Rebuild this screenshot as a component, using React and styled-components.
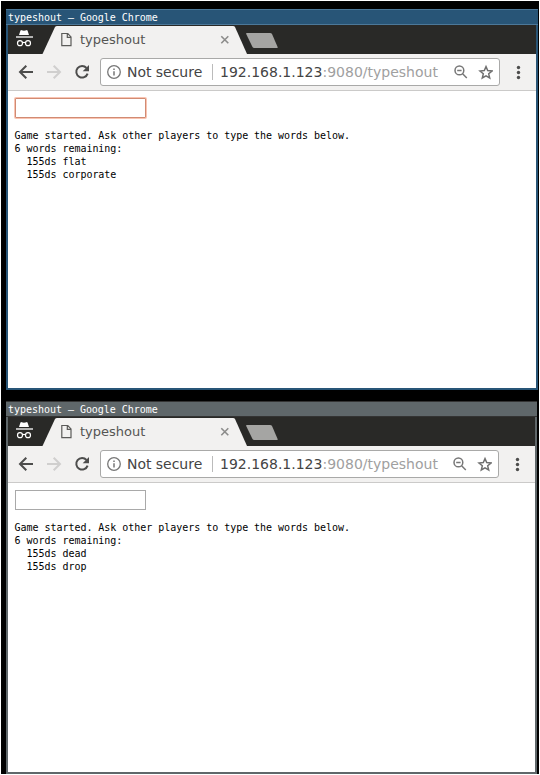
import React from "react";
import styled, { createGlobalStyle } from "styled-components";

const GlobalStyle = createGlobalStyle`
  * { box-sizing: border-box; }
  body { margin: 0; background: #fff; font-family: "DejaVu Sans", sans-serif; }
`;

const Desktop = styled.main`
  width: 538px;
  height: 773px;
  margin: 1px;
  padding: 8px 0 0 5px;
  background: #000;
  display: flex;
  flex-direction: column;
  gap: 11px;
`;

const Window = styled.section`
  display: flex;
  flex-direction: column;
  width: ${(p) => (p.$active ? 532 : 531)}px;
  height: ${(p) => (p.$active ? 381 : 373)}px;
  border: 2px solid ${(p) => (p.$active ? "#285577" : "#5f676a")};
  border-top: 0;
`;

const TitleBar = styled.header`
  flex: none;
  height: 16px;
  margin: 0 -2px;
  padding: 1px 0 0 2px;
  border-top: 1px solid ${(p) => (p.$active ? "#4c7899" : "#333")};
  border-bottom: 1px solid ${(p) => (p.$active ? "#4c7899" : "#333")};
  background: ${(p) => (p.$active ? "#285577" : "#5f676a")};
  color: #fff;
  font: 10px/14px "DejaVu Sans Mono", monospace;
  letter-spacing: -0.03px;
  white-space: pre;
`;

const TabStrip = styled.div`
  flex: none;
  height: 29px;
  display: flex;
  background: #292927;
`;

const StripArt = styled.svg`
  display: block;
  flex: none;
`;

const Tab = styled.div`
  width: 151px;
  height: 28px;
  margin-top: 1px;
  display: flex;
  align-items: center;
  background: #f2f1f0;
  color: #555553;
  font-size: 13px;
  line-height: 27px;
  padding-bottom: 1px;
`;

const TabLabel = styled.span`
  flex: 1;
  padding-left: 8px;
`;

const Toolbar = styled.div`
  flex: none;
  height: 37px;
  display: flex;
  align-items: flex-start;
  padding-top: 4px;
  background: #f2f1f0;
  border-bottom: 1px solid #cbcac9;
`;

const NavIcons = styled.svg`
  display: block;
  flex: none;
  width: 92px;
  height: 28px;
`;

const AddressBar = styled.div`
  display: flex;
  align-items: center;
  width: ${(p) => (p.$active ? 400 : 399)}px;
  height: 28px;
  border: 1px solid #a9a9a8;
  border-radius: 3px;
  background: #fff;
  padding-left: 6px;
  color: #444;
  font-size: 14px;
  line-height: 26px;
  white-space: nowrap;
`;

const Security = styled.span`
  width: 76px;
  margin-left: 6px;
  letter-spacing: -0.03px;
`;

const Divider = styled.i`
  width: 1px;
  height: 16px;
  margin: 0 7px 0 9px;
  background: #bbb;
`;

const Url = styled.span`
  width: 219px;
`;

const Muted = styled.span`
  color: #a0a0a0;
`;

const ActionIcons = styled.svg`
  display: block;
  flex: none;
  margin-left: ${(p) => (p.$active ? 14 : 13)}px;
`;

const MenuIcon = styled.svg`
  display: block;
  margin-left: 15px;
`;

const Page = styled.div`
  flex: 1;
  background: #fff;
  padding: 7px 0 0 7px;
`;

const WordInput = styled.input`
  display: block;
  width: 131px;
  height: 20px;
  padding: 1px 3px;
  border: 1px solid ${(p) => (p.$active ? "#d18b73" : "#a9a9a9")};
  border-radius: ${(p) => (p.$active ? 1 : 0)}px;
  box-shadow: ${(p) => (p.$active ? "0 0 0 1px #f9c4b2" : "none")};
  background: #fff;
  outline: none;
`;

const Output = styled.pre`
  margin: 11px 0 0 -0.5px;
  color: #000;
  font: 10px/13px "DejaVu Sans Mono", monospace;
  letter-spacing: -0.03px;
`;

function Tabs() {
  return (
    <TabStrip>
      <StripArt width="53" height="29" viewBox="0 0 53 29">
        <path d="M34.5 29 47 2Q47.8 1 49 1H53V29Z" fill="#f2f1f0" />
        <path d="M12.4 5.7q.4-.8 1.2-.5l2.4.6 2.4-.6q.8-.3 1.2.5L21 10H11Z" fill="#fff" />
        <path d="M8 12h17" stroke="#fff" strokeWidth="1.3" />
        <g fill="none" stroke="#fff" strokeWidth="1.2">
          <circle cx="12" cy="18.2" r="2.5" />
          <circle cx="20" cy="18.2" r="2.5" />
          <path d="M14.5 17.7q1.5-.8 3 0" />
        </g>
      </StripArt>
      <Tab>
        <StripArt width="11" height="15" viewBox="0 0 11 15">
          <path d="M.8 1.5h6L10 4.9v8.8H.8ZM6.3 1.6v3.8H10" fill="none" stroke="#5b5b59" strokeWidth="1.2" />
        </StripArt>
        <TabLabel>typeshout</TabLabel>
      </Tab>
      <StripArt width="70" height="29" viewBox="0 0 70 29">
        <path d="M0 1H21Q22.5 1 23 2L35 29H0Z" fill="#f2f1f0" />
        <path d="m9.3 11.2 7 7m0-7-7 7" stroke="#8c8c8b" strokeWidth="1.6" />
        <path d="M34.7 8H58Q59.5 8 60 9L65.5 21.7Q66 23 65 23H42.3Q41 23 40.5 22L34.2 9Q33.8 8 34.7 8Z" fill="#a5a5a3" />
      </StripArt>
    </TabStrip>
  );
}

function BrowserWindow({ active, words }) {
  return (
    <Window $active={active}>
      <TitleBar $active={active}>typeshout – Google Chrome</TitleBar>
      <Tabs />
      <Toolbar>
        <NavIcons viewBox="0 0 92 28">
          <g fill="none" strokeWidth="2">
            <path d="M25 14H12.5M18.3 7.7 12 14l6.3 6.3" stroke="#4d4d4c" />
            <path d="M39 14h12.5M45.7 7.7 52 14l-6.3 6.3" stroke="#d0cfce" />
            <path d="M78.5 10A5.8 5.8 0 1 0 79.6 15.6" stroke="#4d4d4c" />
          </g>
          <path d="M81 7v6.3h-6.3Z" fill="#4d4d4c" />
        </NavIcons>
        <AddressBar $active={active}>
          <StripArt width="14" height="14" viewBox="0 0 14 14">
            <circle cx="7" cy="7" r="6.3" fill="none" stroke="#777" strokeWidth="1.3" />
            <path d="M7 6.2v4.2M7 3.5v1.4" stroke="#777" strokeWidth="1.5" />
          </StripArt>
          <Security>Not secure</Security>
          <Divider />
          <Url>
            192.168.1.123<Muted>:9080/typeshout</Muted>
          </Url>
          <ActionIcons $active={active} width="40" height="16" viewBox="0 0 40 16">
            <g fill="none" stroke="#777" strokeWidth="1.5">
              <circle cx="6.4" cy="6.4" r="4.4" />
              <path d="m9.6 9.8 4.2 4.2M4.2 6.4h4.4" />
            </g>
            <path d="m33 2.6 1.7 4 4.3.4-3.3 2.8 1 4.2-3.7-2.2-3.7 2.2 1-4.2L27 7l4.3-.4Z" fill="none" stroke="#707070" strokeWidth="1.5" />
          </ActionIcons>
        </AddressBar>
        <MenuIcon width="8" height="28" viewBox="0 0 8 28" fill="#4d4d4c">
          <circle cx="3.5" cy="9.5" r="1.7" />
          <circle cx="3.5" cy="14.5" r="1.7" />
          <circle cx="3.5" cy="19.5" r="1.7" />
        </MenuIcon>
      </Toolbar>
      <Page>
        <WordInput $active={active} aria-label="Word" />
        <Output>
          {"Game started. Ask other players to type the words below.\n6 words remaining:\n" +
            words.map((word) => `  155ds ${word}`).join("\n")}
        </Output>
      </Page>
    </Window>
  );
}

export default function App() {
  return (
    <>
      <GlobalStyle />
      <Desktop>
        <BrowserWindow active words={["flat", "corporate"]} />
        <BrowserWindow words={["dead", "drop"]} />
      </Desktop>
    </>
  );
}
